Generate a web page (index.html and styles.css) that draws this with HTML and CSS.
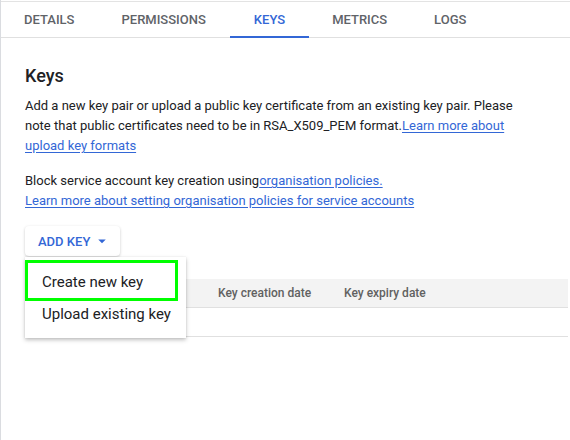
FILE: index.html
```html
<!DOCTYPE html>
<html lang="en">
<head>
<meta charset="utf-8">
<title>Keys</title>
<link rel="stylesheet" href="styles.css">
</head>
<body>
<div class="page">
  <nav class="tabbar">
    <div class="tab">Details</div>
    <div class="tab">Permissions</div>
    <div class="tab active">Keys</div>
    <div class="tab">Metrics</div>
    <div class="tab">Logs</div>
  </nav>
  <main class="content">
    <h2 class="title">Keys</h2>
    <p class="text">Add a new key pair or upload a public key certificate from an existing key pair. Please note that public certificates need to be in RSA_X509_PEM format.<a href="#" class="link">Learn more about upload key formats</a></p>
    <p class="text">Block service account key creation using<a href="#" class="link">organisation policies.</a><br><a href="#" class="link">Learn more about setting organisation policies for service accounts</a></p>
    <div class="actions">
      <button class="add-btn" type="button">ADD KEY<svg class="caret" width="18" height="18" viewBox="0 0 24 24"><path d="M7 10l5 5 5-5z" fill="currentColor"/></svg></button>
      <div class="menu">
        <div class="menu-item">Create new key</div>
        <div class="menu-item">Upload existing key</div>
        <div class="highlight"></div>
      </div>
    </div>
    <div class="table">
      <div class="thead">
        <div class="th"></div>
        <div class="th">Key creation date</div>
        <div class="th">Key expiry date</div>
      </div>
      <div class="trow"></div>
    </div>
  </main>
</div>
</body>
</html>
```
FILE: styles.css
```css
html, body {
  margin: 0;
  padding: 0;
  background: #ffffff;
}

body {
  font-family: Roboto, "Liberation Sans", Arial, sans-serif;
  color: #202124;
}

.page {
  min-height: 440px;
  border-left: 1px solid #dadce0;
  box-sizing: border-box;
  padding-top: 1px;
}

.tabbar {
  display: flex;
  border-top: 1px solid #e3e3e3;
  border-bottom: 1px solid #e0e0e0;
}

.tab {
  position: relative;
  height: 35px;
  padding: 0 24px 0 23px;
  display: flex;
  align-items: center;
  font-size: 13px;
  font-weight: 500;
  text-transform: uppercase;
  color: #5f6368;
}

.tab.active {
  color: #3367d6;
  padding: 0 24px;
}

.tab.active::after {
  content: "";
  position: absolute;
  left: 0;
  right: 0;
  bottom: -1px;
  height: 2px;
  background: #3367d6;
}

.content {
  padding: 0 2px 0 24px;
}

.title {
  margin: 26px 0 8px;
  font-size: 18px;
  line-height: 24px;
  font-weight: 500;
  color: #202124;
}

.text {
  margin: 0 0 15px;
  max-width: 510px;
  font-size: 13px;
  line-height: 20px;
  color: #202124;
}

.link {
  color: #3367d6;
  text-decoration: underline;
  text-underline-offset: 2px;
}

.actions {
  position: relative;
  margin-top: 2px;
  display: flex;
}

.add-btn {
  display: inline-flex;
  align-items: center;
  height: 30px;
  padding: 0 9px 0 13px;
  border: none;
  border-radius: 4px;
  background: #ffffff;
  box-shadow: 0 1px 3px rgba(0, 0, 0, 0.22);
  color: #3367d6;
  font-family: Roboto, "Liberation Sans", Arial, sans-serif;
  font-size: 13px;
  font-weight: 500;
}

.caret {
  margin-left: 3px;
}

.menu {
  position: absolute;
  top: 31px;
  left: 0;
  width: 161px;
  padding: 9px 0 8px;
  background: #ffffff;
  box-shadow: 0 2px 4px rgba(0, 0, 0, 0.25), 0 0 1px rgba(0, 0, 0, 0.12);
  z-index: 2;
}

.menu-item {
  height: 32px;
  display: flex;
  align-items: center;
  padding-left: 17px;
  font-size: 15px;
  color: #202124;
}

.highlight {
  position: absolute;
  left: 0;
  top: 3px;
  width: 153px;
  height: 41px;
  box-sizing: border-box;
  border: 3px solid #00ff00;
}

.table {
  margin-top: 23px;
}

.thead {
  display: grid;
  grid-template-columns: 193px 126px 1fr;
  height: 28px;
  align-items: center;
  background: #f3f3f3;
  border-bottom: 1px solid #e0e0e0;
}

.th {
  font-size: 12px;
  font-weight: 500;
  color: #616161;
}

.trow {
  height: 28px;
  border-bottom: 1px solid #e0e0e0;
}
```
